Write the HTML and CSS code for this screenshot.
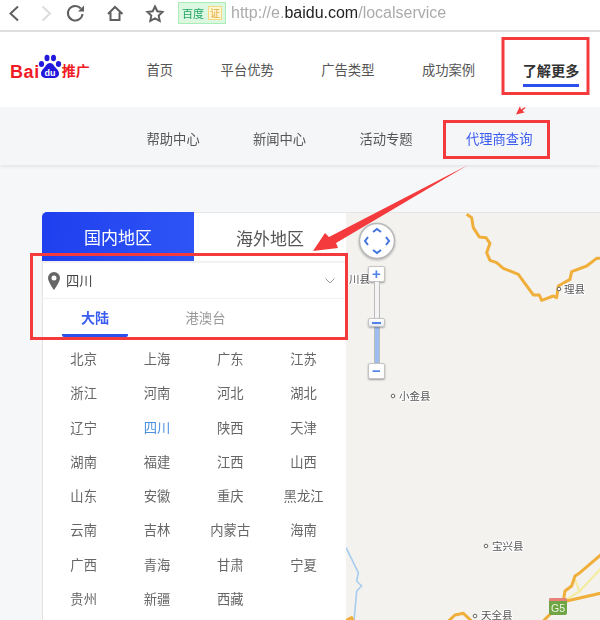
FILE: index.html
```html
<!DOCTYPE html>
<html lang="zh">
<head>
<meta charset="utf-8">
<title>百度推广</title>
<link rel="stylesheet" href="styles.css">
</head>
<body>
<div class="page">
  <div class="chrome">
    <svg class="chrome-icons" width="172" height="30" viewBox="0 0 172 30">
      <path class="ic" d="M18 6.5 10.5 13.5 18 20.5"/>
      <path class="ic ic-off" d="M42.500 6.500 50 13.500 42.500 20.500"/>
      <path class="ic" d="M80.800 8.500A7.300 7.300 0 1 0 82.500 14"/>
      <path class="ic-fill" d="M84 5.500V11.500H78Z"/>
      <path class="ic" d="M108 14 115 7 122.500 14M110.500 12.500V20H119.500V12.500"/>
      <path class="ic" d="M155 6.500 157.300 11.300 162.500 12 158.700 15.600 159.700 20.800 155 18.300 150.300 20.800 151.300 15.600 147.500 12 152.700 11.300Z"/>
    </svg>
    <div class="badge"><span class="badge-name">百度</span><span class="badge-cert">证</span></div>
    <div class="url">http://e.<b>baidu.com</b>/localservice</div>
  </div>

  <header class="header">
    <div class="logo">
      <span class="logo-bai">Bai</span>
      <svg class="logo-paw" width="24" height="25" viewBox="0 0 24 25">
        <ellipse cx="3.500" cy="10" rx="2.600" ry="3" fill="#2319dc"/>
        <ellipse cx="9" cy="4" rx="2.500" ry="3.300" fill="#2319dc"/>
        <ellipse cx="15.500" cy="4" rx="2.500" ry="3.300" fill="#2319dc"/>
        <ellipse cx="20.500" cy="10" rx="2.600" ry="3" fill="#2319dc"/>
        <path d="M12 9C9 9 8 12 6 14 3.500 16.500 3 18 3 19.500 3 23 6 24 8 24H16C18 24 21 23 21 19.500 21 18 20.500 16.500 18 14 16 12 15 9 12 9Z" fill="#2319dc"/>
        <text class="logo-du" x="12" y="22" text-anchor="middle">du</text>
      </svg>
      <span class="logo-cn">推广</span>
    </div>
    <nav class="nav">
      <a class="nav-item">首页</a>
      <a class="nav-item">平台优势</a>
      <a class="nav-item">广告类型</a>
      <a class="nav-item">成功案例</a>
      <a class="nav-item nav-item-active">了解更多</a>
    </nav>
  </header>

  <div class="subnav">
    <a class="subnav-item">帮助中心</a>
    <a class="subnav-item">新闻中心</a>
    <a class="subnav-item">活动专题</a>
    <a class="subnav-item subnav-item-active">代理商查询</a>
  </div>

  <main class="main">
    <section class="panel">
      <div class="tabs">
        <div class="tab tab-active">国内地区</div>
        <div class="tab">海外地区</div>
      </div>
      <div class="select">
        <svg class="pin" width="12" height="18" viewBox="0 0 12 18">
          <path fill-rule="evenodd" d="M6 0A6 6 0 0 0 0 6C0 10 6 18 6 18S12 10 12 6A6 6 0 0 0 6 0ZM6 3.500A2.500 2.500 0 1 1 6 8.500 2.500 2.500 0 0 1 6 3.500Z" fill="#666"/>
        </svg>
        <span class="select-value">四川</span>
        <svg class="chev" width="10" height="6" viewBox="0 0 10 6"><path d="M.5.500 5 5 9.500.500" fill="none" stroke="#999" stroke-width="1"/></svg>
      </div>
      <div class="region-tabs">
        <div class="region-tab region-tab-active">大陆</div>
        <div class="region-tab">港澳台</div>
      </div>
      <div class="cities">
        <a class="city">北京</a><a class="city">上海</a><a class="city">广东</a><a class="city">江苏</a>
        <a class="city">浙江</a><a class="city">河南</a><a class="city">河北</a><a class="city">湖北</a>
        <a class="city">辽宁</a><a class="city city-active">四川</a><a class="city">陕西</a><a class="city">天津</a>
        <a class="city">湖南</a><a class="city">福建</a><a class="city">江西</a><a class="city">山西</a>
        <a class="city">山东</a><a class="city">安徽</a><a class="city">重庆</a><a class="city">黑龙江</a>
        <a class="city">云南</a><a class="city">吉林</a><a class="city">内蒙古</a><a class="city">海南</a>
        <a class="city">广西</a><a class="city">青海</a><a class="city">甘肃</a><a class="city">宁夏</a>
        <a class="city">贵州</a><a class="city">新疆</a><a class="city">西藏</a>
      </div>
    </section>

    <section class="map">
      <svg class="map-canvas" width="254" height="408" viewBox="0 0 254 408">
        <g transform="translate(-6 -2) scale(.3333)">
          <path class="road" d="M380 10 395 20 400 50 418 78 438 80 450 97 440 125 450 148 470 155 490 172 535 190 580 252 598 252 605 268 640 255 650 260 655 225 690 205 695 182 740 165 770 142 790 142"/>
        </g>
        <g transform="translate(-6 198) scale(.3333)">
          <path class="river" d="M18 410 55 485 50 510 65 525 50 540 42 630"/>
          <path class="minor" d="M640 600 680 565 720 540 790 465M705 505 720 545"/>
          <path class="road" d="M790 425 720 485 705 495 695 525 675 540 670 570 600 640M680 570 790 545M315 640 345 612 370 607 395 630M18 628 35 620 45 640"/>
        </g>
        <circle class="dot" cx="213" cy="76" r="1.800"/>
        <text class="place" x="218" y="80">理县</text>
        <circle class="dot" cx="47" cy="183" r="1.800"/>
        <text class="place" x="53" y="187">小金县</text>
        <circle class="dot" cx="140" cy="333" r="1.800"/>
        <text class="place" x="146" y="337">宝兴县</text>
        <circle class="dot" cx="129" cy="403" r="1.800"/>
        <text class="place" x="135" y="405.500">天全县</text>
        <text class="place" x="3" y="70">川县</text>
        <g>
          <rect x="203" y="385" width="18" height="17" rx="2" fill="#6fa544"/>
          <path d="M203 388V387A2 2 0 0 1 205 385H219A2 2 0 0 1 221 387V388Z" fill="#e8817a"/>
          <text class="shield" x="212" y="399" text-anchor="middle">G5</text>
        </g>
      </svg>
      <div class="pan">
        <svg width="38" height="38" viewBox="0 0 38 38">
          <circle cx="19" cy="19" r="17.500" fill="#fff" stroke="#b9b9b9" stroke-width="1.500"/>
          <path class="pan-arrow" d="M15 10 19 7 23 10M15 28 19 31 23 28M10 15 7 19 10 23M28 15 31 19 28 23"/>
        </svg>
      </div>
      <div class="zoom">
        <button class="zoom-btn">+</button>
        <div class="zoom-track zoom-track-top"></div>
        <div class="zoom-handle"></div>
        <div class="zoom-track zoom-track-fill"></div>
        <button class="zoom-btn">−</button>
      </div>
    </section>
  </main>

  <svg class="marks" width="600" height="620" viewBox="0 0 600 620">
    <rect class="mark-box" x="503" y="38.500" width="85" height="55"/>
    <rect class="mark-box" x="444.500" y="121.500" width="104" height="36"/>
    <rect class="mark-box" x="31.500" y="254.500" width="315" height="84"/>
    <path class="mark-arrow" d="M525 107 521 109.500 520 106 516 114.500 524.500 112.500 522.500 110.500 525.500 108Z"/>
    <path class="mark-arrow" d="M313 251 325 233 329 237 468 165 336 243 338 248Z"/>
  </svg>
</div>
</body>
</html>
```
FILE: styles.css
```css
* { box-sizing: border-box; }
html, body { margin: 0; padding: 0; }
body {
  font-family: "Noto Sans CJK SC", "Liberation Sans", sans-serif;
  color: #555;
  background: #f6f7f9;
}
.page {
  position: relative;
  width: 600px;
  height: 620px;
  overflow: hidden;
  display: flex;
  flex-direction: column;
  filter: blur(.4px);
}

/* browser bar */
.chrome {
  flex: none;
  height: 32px;
  display: flex;
  align-items: flex-start;
  background: #fff;
  border-bottom: 2px solid #dedede;
}
.chrome-icons { flex: none; margin-right: 6px; }
.ic { fill: none; stroke: #5f5f5f; stroke-width: 2; }
.ic-off { stroke: #dcdcdc; }
.ic-fill { fill: #5f5f5f; }
.badge {
  flex: none;
  width: 48px;
  height: 22px;
  margin-top: 2px;
  padding: 0 3px;
  display: flex;
  align-items: center;
  justify-content: space-between;
  background: #dcf8e0;
  border: 1px solid #a9ecb7;
}
.badge-name { font-size: 11px; line-height: 14px; color: #22a566; }
.badge-cert {
  width: 14px;
  height: 14px;
  font-size: 10px;
  line-height: 12px;
  text-align: center;
  color: #e0a93a;
  background: #fff6d2;
  border: 1px solid #f6d785;
}
.url {
  margin-left: 5px;
  margin-top: 3px;
  font-family: "Liberation Sans", sans-serif;
  font-size: 16px;
  line-height: 20px;
  color: #ababab;
  white-space: nowrap;
}
.url b { font-weight: 400; color: #222; }

/* header */
.header {
  flex: none;
  height: 75px;
  display: flex;
  align-items: center;
  background: #fff;
  position: relative;
}
.logo {
  flex: none;
  width: 146px;
  height: 32px;
  margin-top: -14px;
  padding-left: 10px;
  display: flex;
  align-items: flex-end;
}
.logo-bai {
  font-family: "Liberation Sans", sans-serif;
  font-weight: 700;
  font-size: 18px;
  line-height: 20px;
  letter-spacing: .6px;
  color: #ef1c25;
  margin-bottom: -3px;
}
.logo-paw { flex: none; margin-left: -2px; }
.logo-du { font-family: "Liberation Sans", sans-serif; font-size: 9px; font-weight: 700; fill: #fff; }
.logo-cn { font-size: 14px; font-weight: 700; line-height: 20px; color: #ef1c25; margin-bottom: -1px; }
.nav { display: flex; gap: 47.500px; align-items: center; padding-left: .5px; }
.nav-item {
  position: relative;
  font-size: 13.300px;
  line-height: 20px;
  color: #555;
  white-space: nowrap;
}
.nav-item-active { font-size: 14.200px; font-weight: 700; color: #333; }
.nav-item-active::after {
  content: "";
  position: absolute;
  left: 0;
  right: 0;
  bottom: -7px;
  height: 2.500px;
  background: #2b50ed;
}

/* sub navigation */
.subnav {
  flex: none;
  height: 58px;
  padding-left: 146.500px;
  padding-top: 6px;
  display: flex;
  align-items: center;
  gap: 53.300px;
  background: #f5f6f8;
  box-shadow: 0 2px 3px rgba(0, 0, 0, .07);
  position: relative;
}
.subnav-item { font-size: 13.300px; line-height: 20px; color: #555; white-space: nowrap; }
.subnav-item-active { color: #3a5cf0; }

/* main */
.main {
  flex: 1;
  min-height: 0;
  margin-top: 47px;
  margin-left: 42px;
  display: flex;
  align-items: stretch;
}
.panel {
  flex: none;
  width: 304px;
  background: #fff;
  border-left: 1px solid #e3e3e3;
}
.tabs { display: flex; height: 49px; margin-left: -1px; }
.tab {
  width: 152px;
  font-size: 17px;
  line-height: 49px;
  text-align: center;
  color: #555;
  white-space: nowrap;
  border-top: 1px solid #e6e6e6;
}
.tab-active {
  color: #fff;
  line-height: 50px;
  border-top: 0;
  border-top-left-radius: 5px;
  background: linear-gradient(100deg, #1f3fee, #2e55f6);
}
.select {
  height: 38px;
  padding-left: 5px;
  padding-right: 11px;
  display: flex;
  align-items: center;
  border-top: 2px solid #f2f2f2;
  border-bottom: 1px solid #f2f2f2;
}
.pin { flex: none; }
.select-value { flex: 1; margin-left: 6px; font-size: 13.300px; line-height: 20px; color: #444; }
.chev { flex: none; }
.region-tabs { height: 44px; display: flex; }
.region-tab {
  width: 66px;
  margin-left: 19px;
  font-size: 13.300px;
  line-height: 37px;
  text-align: center;
  color: #999;
  white-space: nowrap;
}
.region-tab + .region-tab { margin-left: 57px; width: 41px; }
.region-tab-active {
  height: 38px;
  font-size: 14px;
  font-weight: 700;
  color: #3a5cf0;
  border-bottom: 3px solid #2b50ed;
  border-radius: 0 0 2px 2px;
}
.cities {
  padding-left: 4px;
  display: grid;
  grid-template-columns: repeat(4, 73.300px);
  grid-auto-rows: 34.300px;
  margin-top: -1px;
}
.city {
  font-size: 13.300px;
  line-height: 34px;
  text-align: center;
  color: #666;
  white-space: nowrap;
}
.city-active { color: #4a90e2; }

/* map */
.map {
  flex: none;
  position: relative;
  width: 254px;
  background: #f3f2ef;
  border-top: 1px solid #e6e6e6;
}
.map-canvas { display: block; }
.road { fill: none; stroke: #f0ae3a; stroke-width: 9; stroke-linejoin: round; }
.river { fill: none; stroke: #a9cdee; stroke-width: 5; stroke-linejoin: round; }
.minor { fill: none; stroke: #f5eca4; stroke-width: 7; stroke-linejoin: round; }
.dot { fill: #fff; stroke: #666; stroke-width: 1; }
.place {
  font-size: 10.500px;
  fill: #555;
  stroke: #fff;
  stroke-width: 2px;
  paint-order: stroke;
}
.shield { font-family: "Liberation Sans", sans-serif; font-size: 10.500px; fill: #eef5e2; }
.pan { position: absolute; left: 12px; top: 9px; width: 38px; height: 38px; filter: drop-shadow(0 1px 1px rgba(0, 0, 0, .25)); }
.pan svg { display: block; }
.pan-arrow { fill: none; stroke: #3f74e0; stroke-width: 2; }
.zoom {
  position: absolute;
  left: 22px;
  top: 53px;
  width: 17px;
  display: flex;
  flex-direction: column;
  align-items: center;
}
.zoom-btn {
  display: block;
  width: 17px;
  height: 16px;
  padding: 0;
  font-family: "Liberation Sans", sans-serif;
  font-size: 15px;
  line-height: 14px;
  font-weight: 700;
  color: #4f83e6;
  background: #fff;
  border: 1px solid #c4c4c4;
  border-radius: 2px;
  box-shadow: 0 1px 2px rgba(0, 0, 0, .35);
}
.zoom-track { width: 6px; border-left: 1px solid #bbb; border-right: 1px solid #bbb; }
.zoom-track-top { height: 36px; background: #f4f4f4; }
.zoom-track-fill { height: 36px; background: #9dbdf0; }
.zoom-handle {
  width: 17px;
  height: 9px;
  background: linear-gradient(#fff, #e4e9f4);
  border: 1px solid #c4c4c4;
  border-radius: 2px;
  box-shadow: 0 1px 2px rgba(0, 0, 0, .3);
  position: relative;
}
.zoom-handle::after {
  content: "";
  position: absolute;
  left: 3px;
  right: 3px;
  top: 3px;
  height: 1.500px;
  background: #4f83e6;
}

/* annotations */
.marks { position: absolute; left: 0; top: 0; pointer-events: none; }
.mark-box { fill: none; stroke: #f43a3c; stroke-width: 3; }
.mark-arrow { fill: #f43a3c; }
```
